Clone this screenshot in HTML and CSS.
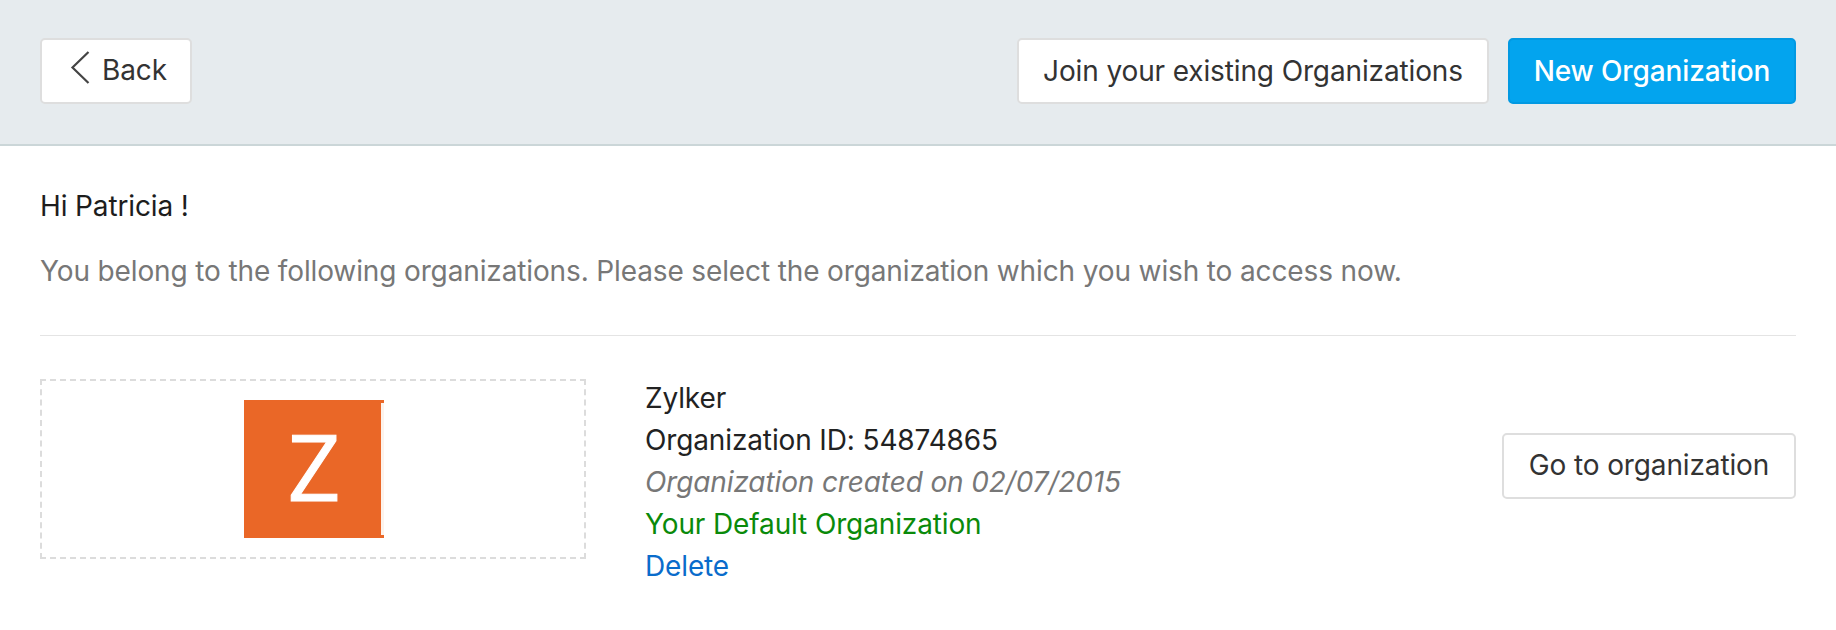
FILE: index.html
```html
<!DOCTYPE html>
<html lang="en">
<head>
<meta charset="utf-8">
<title>Organizations</title>
<link rel="stylesheet" href="styles.css">
</head>
<body>
<header class="topbar">
  <a class="btn btn-back">
    <svg class="chev" viewBox="0 0 20 36" width="20" height="36"><path d="M18.500 2 2.500 17.500 18.500 33" fill="none" stroke="#444" stroke-width="2.200"/></svg>
    <span>Back</span>
  </a>
  <div class="actions">
    <a class="btn btn-join">Join your existing Organizations</a>
    <a class="btn btn-primary">New Organization</a>
  </div>
</header>
<main class="content">
  <p class="hello">Hi Patricia !</p>
  <p class="intro">You belong to the following organizations. Please select the organization which you wish to access now.</p>
  <section class="org">
    <div class="logo-box">
      <div class="logo"><span class="logo-z">Z</span></div>
    </div>
    <div class="details">
      <div class="line">Zylker</div>
      <div class="line">Organization ID: 54874865</div>
      <div class="line created">Organization created on 02/07/2015</div>
      <div class="line default">Your Default Organization</div>
      <div class="line del">Delete</div>
    </div>
    <a class="btn btn-go">Go to organization</a>
  </section>
</main>
</body>
</html>
```
FILE: styles.css
```css
* { box-sizing: border-box; }
html, body { margin: 0; padding: 0; background: #fff; }
body { font-family: Inter, "Liberation Sans", sans-serif; font-size: 28px; letter-spacing: -0.13px; color: #222; width: 1836px; height: 630px; overflow: hidden; }
.topbar { height: 146px; background: #e6ebee; border-bottom: 2px solid #cbd6d8; padding: 38px 40px 0 40px; display: flex; justify-content: space-between; align-items: flex-start; }
.actions { display: flex; gap: 19px; }
.btn { display: inline-flex; align-items: center; justify-content: center; height: 66px; background: #fff; border: 2px solid #dedede; border-radius: 5px; color: #333; white-space: nowrap; }
.btn-back { width: 152px; gap: 12px; padding: 0 0 2px 5px; }
.chev { display: block; margin-bottom: 5px; }
.btn-join { width: 472px; }
.btn-primary { width: 288px; background: #03a4ee; border-color: #0299e2; color: #fff; font-weight: 500; }
.content { padding: 43px 40px 0; }
.hello { margin: 0; line-height: 34px; color: #1d1d1d; }
.intro { margin: 31px 0 0; line-height: 34px; color: #777; padding-bottom: 47px; border-bottom: 1px solid #e4e4e4; }
.org { display: flex; align-items: flex-start; margin-top: 43px; }
.logo-box { width: 546px; height: 180px; border: 2px dashed #dcdcdc; display: flex; align-items: center; justify-content: center; }
.logo { position: relative; width: 140px; height: 138px; margin-left: 2px; background: #ea6727; display: flex; align-items: center; justify-content: center; }
.logo::after { content: ""; position: absolute; right: 0; top: 3px; bottom: 3px; width: 3px; background: #fdf3ec; }
.logo-z { color: #fff; font-family: "Open Sans", sans-serif; font-weight: 500; font-size: 92px; -webkit-text-stroke: 1px #fff; line-height: 1; letter-spacing: 0; margin-top: -6px; }
.details { flex: 1; margin-left: 59px; margin-top: -2px; }
.line { line-height: 42px; color: #222; }
.created { color: #777; font-style: italic; }
.default { color: #0a8a0a; }
.del { color: #0a6ccb; }
.btn-go { width: 294px; margin-top: 54px; padding-bottom: 2px; }
```
